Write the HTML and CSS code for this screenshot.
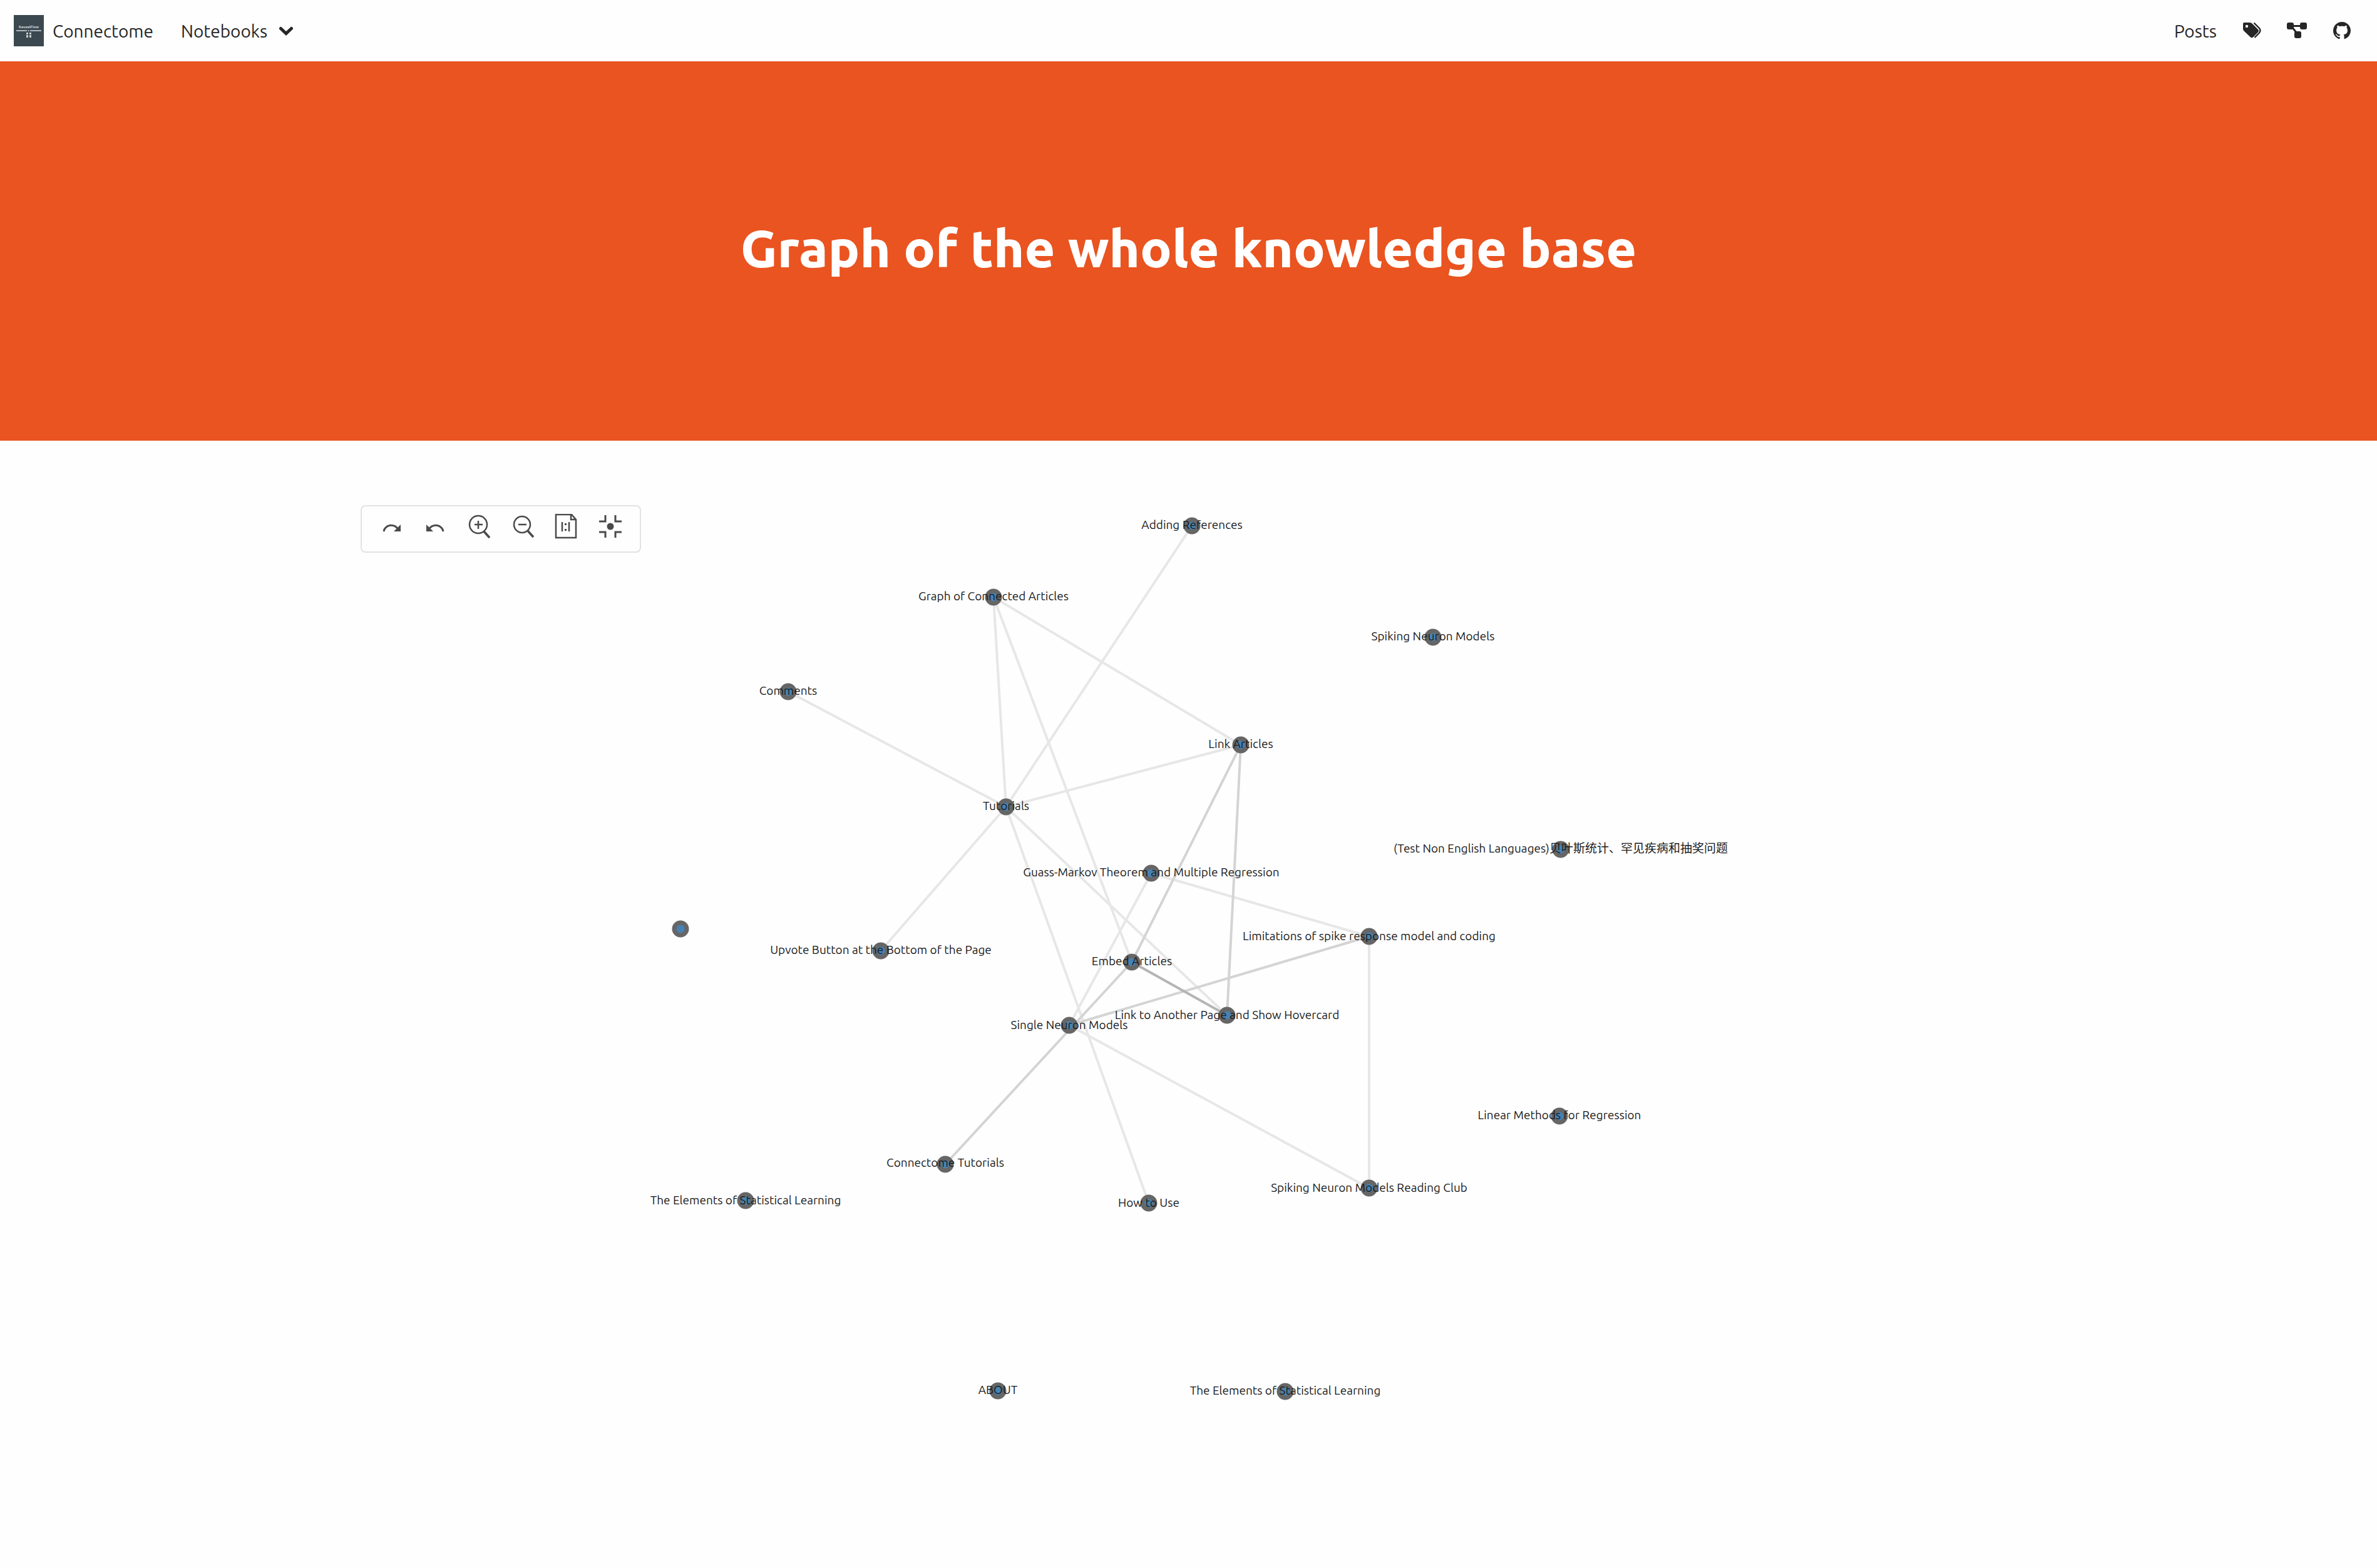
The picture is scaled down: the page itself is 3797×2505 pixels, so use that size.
FILE: index.html
```html
<!DOCTYPE html>
<html lang="en">
<head>
<meta charset="utf-8">
<meta name="viewport" content="width=device-width, initial-scale=1">
<title>Connectome</title>
<link rel="stylesheet" href="styles.css">
</head>
<body>
<nav class="navbar" aria-label="Main">
  <div class="nav-group">
    <a class="brand" href="#">
      <svg class="logo" viewBox="0 0 48 50" aria-hidden="true">
        <rect width="48" height="50" fill="#3b4850"/>
        <text class="logo-text" x="24" y="21" text-anchor="middle">KausalFlow</text>
        <path d="M4 25H21M26 25H44" stroke="#d5dadd" stroke-width="1.5"/>
        <circle cx="23.500" cy="25" r="1" fill="#d5dadd"/>
        <path d="M20 28h3v3h-3zM25 28h3v3h-3zM20 32h3v4h-3zM25 32h3v4h-3z" fill="#c3c9cd"/>
      </svg>
      Connectome
    </a>
    <button class="nav-menu" type="button">Notebooks
      <svg class="chevron" viewBox="0 0 24 18" aria-hidden="true"><path d="M3.500 5.500L12 13.500L20.500 5.500" fill="none" stroke="currentColor" stroke-width="5" stroke-linecap="round"/></svg>
    </button>
  </div>
  <div class="nav-group nav-end">
    <a href="#">Posts</a>
    <a href="#" aria-label="Tags"><svg class="icon" viewBox="0 0 32 28"><path fill="currentColor" fill-rule="evenodd" d="M4 1h9q2 0 3.500 1.500L26 12q2 2 0 4.500L18.500 24q-2.500 2.500-5 0L3.500 14.500Q2 13 2 11V3q0-2 2-2zM8 4.800a2.200 2.200 0 1 0 0 4.400a2.200 2.200 0 0 0 0-4.400z"/><path d="M19.500 1.500L27.500 9.500Q31.500 13.500 27.500 18L20.500 25" fill="none" stroke="currentColor" stroke-width="2.400"/></svg></a>
    <a href="#" aria-label="Graph"><svg class="icon" viewBox="0 0 32 28"><g fill="currentColor"><rect x="0" y="1" width="11" height="11" rx="3"/><rect x="21" y="1" width="11" height="11" rx="3"/><rect x="12" y="15" width="11" height="11" rx="3"/></g><path d="M8 6.500H24M8 8L16 18" stroke="currentColor" stroke-width="3"/></svg></a>
    <a href="#" aria-label="GitHub"><svg class="icon" viewBox="0 0 16 16"><path fill="currentColor" d="M8 0C3.580 0 0 3.580 0 8c0 3.540 2.290 6.530 5.470 7.590.4.070.55-.17.55-.38 0-.19-.01-.82-.01-1.490-2.010.37-2.530-.49-2.690-.94-.09-.23-.48-.94-.82-1.130-.28-.15-.68-.52-.01-.53.63-.01 1.080.58 1.230.82.72 1.210 1.870.87 2.330.66.070-.52.28-.87.51-1.070-1.780-.2-3.640-.89-3.640-3.950 0-.87.31-1.590.82-2.150-.08-.2-.36-1.020.08-2.120 0 0 .67-.21 2.200.82.64-.18 1.320-.27 2-.27s1.360.09 2 .27c1.530-1.040 2.200-.82 2.200-.82.44 1.100.16 1.920.08 2.120.51.56.82 1.270.82 2.150 0 3.070-1.870 3.750-3.650 3.950.29.25.54.73.54 1.480 0 1.070-.01 1.930-.01 2.200 0 .21.15.46.55.38A8.010 8.010 0 0 0 16 8c0-4.420-3.580-8-8-8z"/></svg></a>
  </div>
</nav>
<header class="hero"><h1>Graph of the whole knowledge base</h1></header>
<main class="graph">
  <div class="toolbar" role="toolbar" aria-label="Graph tools">
    <button type="button" aria-label="Redo"><svg viewBox="0 0 40 40"><path d="M8 28A12 11 0 0 1 31 25" fill="none" stroke="currentColor" stroke-width="3"/><path d="M35 17v11H24z" fill="currentColor"/></svg></button>
    <button type="button" aria-label="Undo"><svg viewBox="0 0 40 40"><path d="M33 28A12 11 0 0 0 10 25" fill="none" stroke="currentColor" stroke-width="3"/><path d="M6 17v11H17z" fill="currentColor"/></svg></button>
    <button type="button" aria-label="Zoom in"><svg viewBox="0 0 40 40"><g fill="none" stroke="currentColor" stroke-width="2.500"><circle cx="19" cy="17" r="14"/><path d="M13 17h13M19 11v13"/><path d="M28 28L37 38" stroke-width="3.500"/></g></svg></button>
    <button type="button" aria-label="Zoom out"><svg viewBox="0 0 40 40"><g fill="none" stroke="currentColor" stroke-width="2.500"><circle cx="19" cy="17" r="13"/><path d="M13 17h13"/><path d="M28 27L37 37" stroke-width="3.500"/></g></svg></button>
    <button type="button" aria-label="Actual size"><svg viewBox="0 0 40 40"><g fill="none" stroke="currentColor" stroke-width="2.500"><path d="M3 1H28L35 9V38H3zM27 1V9H35"/><path d="M13 13V28M24 13V28" stroke-width="2.500"/></g><path d="M17 15h3v3h-3zM17 24h3v3h-3z" fill="currentColor"/></svg></button>
    <button type="button" aria-label="Fit view"><svg viewBox="0 0 40 40"><path d="M2 12H12V2M28 2V12H38M2 29H12V38M28 38V29H38" fill="none" stroke="currentColor" stroke-width="3"/><circle cx="20" cy="20" r="5.500" fill="currentColor"/></svg></button>
  </div>
  <svg class="canvas" viewBox="576 808 2645 1600" role="img" aria-label="Linked articles">
    <g class="edges">
      <path d="M1904 841L1607 1290M1587 955L1607 1290M1587 955L1808 1538M1587 955L1982 1191M1259 1106L1607 1290M1982 1191L1607 1290M1607 1290L1407 1520M1607 1290L1960 1623M1607 1290L1835 1923M1839 1396L1708 1639M1839 1396L2187 1497M2187 1497V1899M1708 1639L2187 1899"/>
      <path class="double" d="M1982 1191L1808 1538M1982 1191L1960 1623M1808 1538L1510 1861M2187 1497L1708 1639"/>
      <path class="triple" d="M1808 1538L1960 1623"/>
    </g>
    <g class="nodes">
      <circle cx="1904" cy="841" r="10"/><circle cx="1587" cy="955" r="10"/><circle cx="2289" cy="1019" r="10"/><circle cx="1259" cy="1106" r="10"/><circle cx="1982" cy="1191" r="10"/><circle cx="1607" cy="1290" r="10"/><circle cx="2493" cy="1358" r="10"/><circle cx="1839" cy="1396" r="10"/><circle cx="1087" cy="1485" r="10"/><circle cx="2187" cy="1497" r="10"/><circle cx="1407" cy="1520" r="10"/><circle cx="1808" cy="1538" r="10"/><circle cx="1960" cy="1623" r="10"/><circle cx="1708" cy="1639" r="10"/><circle cx="2491" cy="1784" r="10"/><circle cx="1510" cy="1861" r="10"/><circle cx="2187" cy="1899" r="10"/><circle cx="1191" cy="1919" r="10"/><circle cx="1835" cy="1923" r="10"/><circle cx="1594" cy="2223" r="10"/><circle cx="2053" cy="2224" r="10"/>
    </g>
    <g class="labels">
      <text x="1904" y="846">Adding References</text>
      <text x="1587" y="960">Graph of Connected Articles</text>
      <text x="2289" y="1024">Spiking Neuron Models</text>
      <text x="1259" y="1111">Comments</text>
      <text x="1982" y="1196">Link Articles</text>
      <text x="1607" y="1295">Tutorials</text>
      <text x="2493" y="1363">(Test Non English Languages)贝叶斯统计、罕见疾病和抽奖问题</text>
      <text x="1839" y="1401">Guass-Markov Theorem and Multiple Regression</text>
      <text x="2187" y="1503">Limitations of spike response model and coding</text>
      <text x="1407" y="1525">Upvote Button at the Bottom of the Page</text>
      <text x="1808" y="1543">Embed Articles</text>
      <text x="1960" y="1629">Link to Another Page and Show Hovercard</text>
      <text x="1708" y="1645">Single Neuron Models</text>
      <text x="2491" y="1789">Linear Methods for Regression</text>
      <text x="1510" y="1865">Connectome Tutorials</text>
      <text x="2187" y="1905">Spiking Neuron Models Reading Club</text>
      <text x="1191" y="1925">The Elements of Statistical Learning</text>
      <text x="1835" y="1929">How to Use</text>
      <text x="1594" y="2228">ABOUT</text>
      <text x="2053" y="2229">The Elements of Statistical Learning</text>
    </g>
  </svg>
</main>
</body>
</html>
```

FILE: styles.css
```css
* { box-sizing: border-box; }
body {
  margin: 0;
  background: #fefefe;
  color: #262626;
  font-family: Ubuntu, "Noto Sans", "Noto Sans CJK SC", sans-serif;
  font-size: 28px;
}
a { color: inherit; text-decoration: none; }
button { padding: 0; border: 0; background: none; color: inherit; font: inherit; }
svg { display: block; }
.navbar {
  display: flex;
  justify-content: space-between;
  align-items: center;
  height: 98px;
  padding: 0 40px 0 22px;
}
.nav-group { display: flex; align-items: center; gap: 44px; }
.nav-end { gap: 40px; }
.brand, .nav-menu { display: flex; align-items: center; gap: 14px; }
.nav-menu { gap: 18px; }
.logo { width: 48px; height: 50px; }
.logo-text { font-size: 6px; font-weight: 700; fill: #d5dadd; }
.chevron { width: 24px; height: 18px; }
.icon { width: 32px; height: 28px; }
.hero {
  display: grid;
  place-items: center;
  height: 606px;
  padding: 0 24px 10px;
  background: #e95420;
  color: #fff;
}
.hero h1 { margin: 0; font-size: 84px; line-height: 96px; font-weight: 800; }
.graph {
  position: relative;
  max-width: 2645px;
  margin: 103px auto 0;
}
.canvas { width: 100%; height: auto; }
.toolbar {
  position: absolute;
  top: 0;
  left: 0;
  display: flex;
  align-items: flex-start;
  gap: 30px;
  height: 76px;
  padding: 12px 27px;
  border: 2px solid #e2e2e2;
  border-radius: 8px;
  background: #fefefe;
  color: #4a4a4a;
}
.toolbar svg { width: 40px; height: 40px; }
.edges { fill: none; stroke: #e7e7e7; stroke-width: 4px; }
.edges .double { stroke: #d4d4d4; }
.edges .triple { stroke: #b5b5b5; }
.nodes { fill: #4682b4; stroke: #666; stroke-width: 7px; }
.labels { font-size: 19px; fill: #1a1a1a; text-anchor: middle; }
```
